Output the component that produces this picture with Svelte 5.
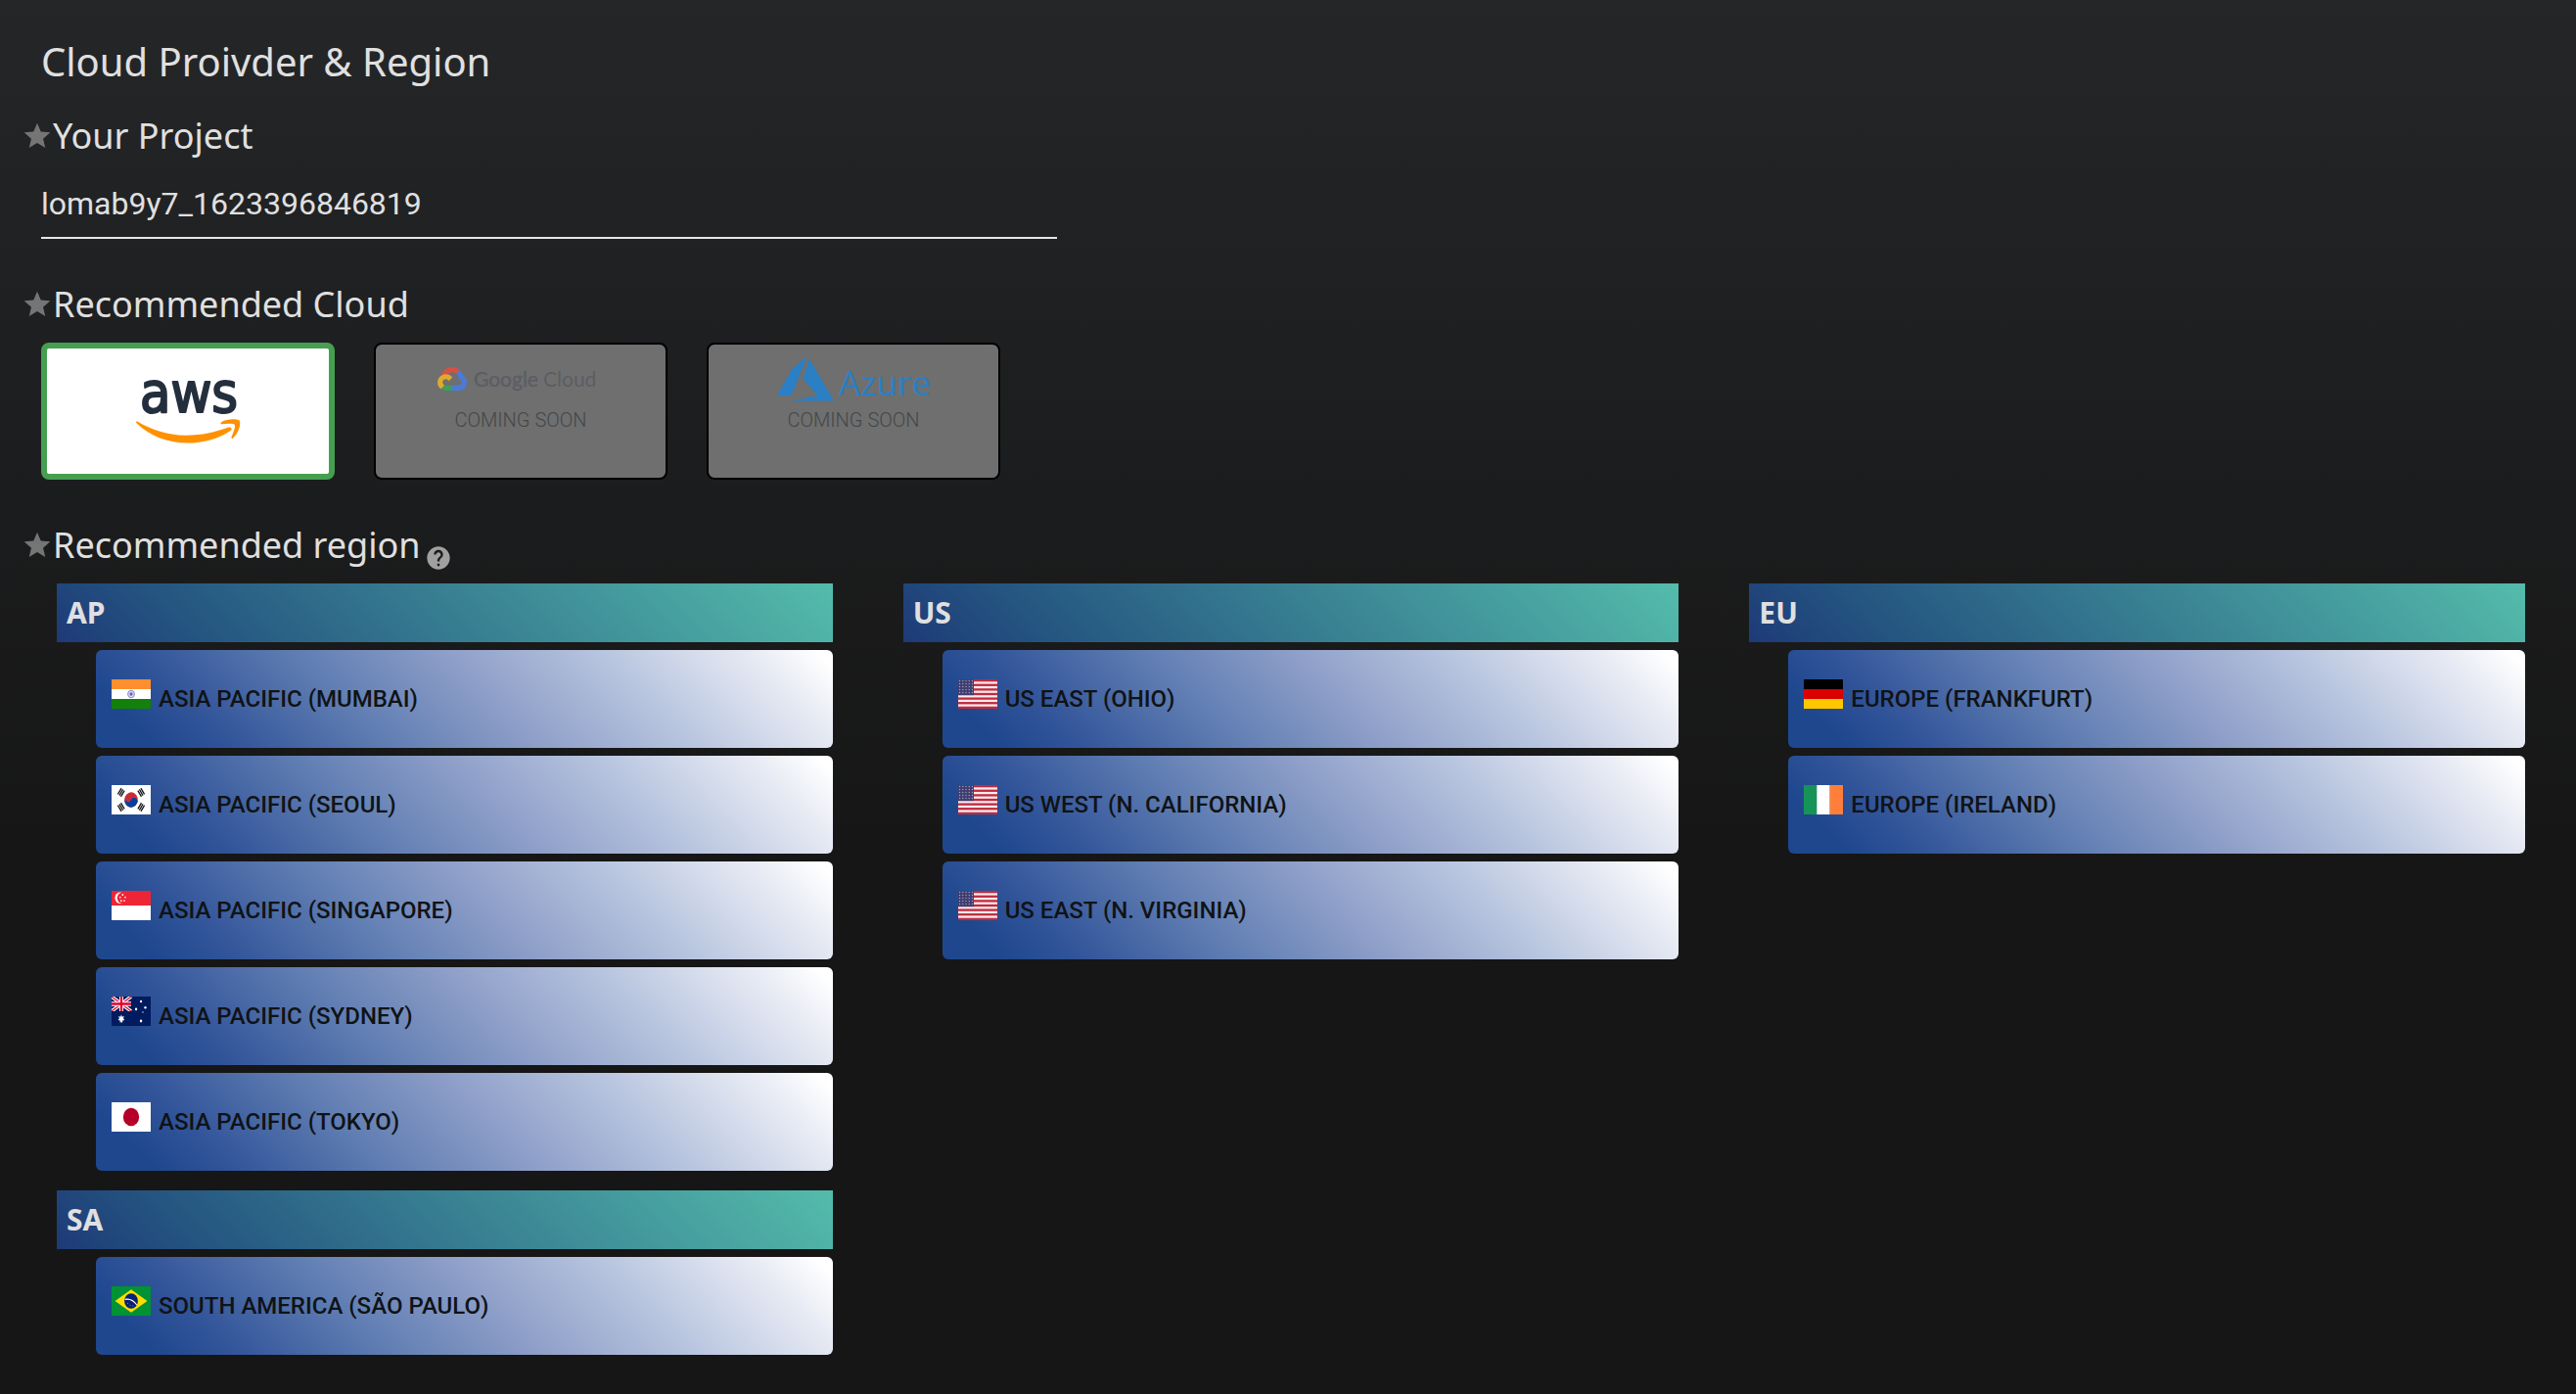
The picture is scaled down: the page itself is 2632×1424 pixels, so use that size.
<script>
  let project = $state('lomab9y7_1623396846819');
  let cloud = $state('aws');
  let region = $state('');

  const columns = [
    [
      {
        code: 'AP',
        regions: [
          { flag: 'in', name: 'ASIA PACIFIC (MUMBAI)' },
          { flag: 'kr', name: 'ASIA PACIFIC (SEOUL)' },
          { flag: 'sg', name: 'ASIA PACIFIC (SINGAPORE)' },
          { flag: 'au', name: 'ASIA PACIFIC (SYDNEY)' },
          { flag: 'jp', name: 'ASIA PACIFIC (TOKYO)' }
        ]
      },
      { code: 'SA', regions: [{ flag: 'br', name: 'SOUTH AMERICA (SÃO PAULO)' }] }
    ],
    [
      {
        code: 'US',
        regions: [
          { flag: 'us', name: 'US EAST (OHIO)' },
          { flag: 'us', name: 'US WEST (N. CALIFORNIA)' },
          { flag: 'us', name: 'US EAST (N. VIRGINIA)' }
        ]
      }
    ],
    [
      {
        code: 'EU',
        regions: [
          { flag: 'de', name: 'EUROPE (FRANKFURT)' },
          { flag: 'ie', name: 'EUROPE (IRELAND)' }
        ]
      }
    ]
  ];

  const stripes = [0, 2, 4, 6, 8, 10, 12];
  const trigrams = [
    { x: 11, y: 7.5, r: -56 },
    { x: 34, y: 7.5, r: 56 },
    { x: 11, y: 22.5, r: 56 },
    { x: 34, y: 22.5, r: -56 }
  ];
  const starRows = [1.5, 4.5, 7.5, 10.5, 13.5];
  const starCols = [1.8, 5.4, 9, 12.6, 16.2];
</script>

{#snippet star()}
  <svg class="star" viewBox="0 0 24 24" aria-hidden="true">
    <path d="M12 17.27L18.18 21l-1.64-7.03L22 9.24l-7.19-.61L12 2 9.19 8.63 2 9.24l5.46 4.73L5.82 21z" />
  </svg>
{/snippet}

{#snippet flagIcon(code)}
  <svg class="flag" viewBox="0 0 45 30" preserveAspectRatio="none" aria-hidden="true">
    {#if code === 'in'}
      <rect width="45" height="30" fill="#fff" />
      <rect width="45" height="10" fill="#ff8f2e" />
      <rect y="20" width="45" height="10" fill="#12800b" />
      <circle cx="22.5" cy="15" r="3.8" fill="#dcdcf0" stroke="#7f7fc4" stroke-width="1" />
      <circle cx="22.5" cy="15" r="1.7" fill="#5c5cb2" />
    {:else if code === 'kr'}
      <rect width="45" height="30" fill="#fff" />
      <g transform="rotate(28 22.5 15)">
        <circle cx="22.5" cy="15" r="7.7" fill="#cb2b38" />
        <path d="M14.8 15a7.7 7.7 0 0 0 15.4 0a3.85 3.85 0 0 0-7.7 0a3.85 3.85 0 0 1-7.7 0z" fill="#05419c" />
      </g>
      {#each trigrams as t}
        <g transform="translate({t.x} {t.y}) rotate({t.r})" fill="#111">
          <rect x="-3.7" y="-2.8" width="7.4" height="1.4" />
          <rect x="-3.7" y="-.7" width="7.4" height="1.4" />
          <rect x="-3.7" y="1.4" width="7.4" height="1.4" />
        </g>
      {/each}
    {:else if code === 'sg'}
      <rect width="45" height="30" fill="#fff" />
      <rect width="45" height="15" fill="#ee2536" />
      <circle cx="9.6" cy="7.3" r="5.7" fill="#fff" />
      <circle cx="12" cy="7.3" r="5.5" fill="#ee2536" />
      <g fill="#fff">
        <circle cx="12.8" cy="4" r=".9" />
        <circle cx="9.9" cy="6.6" r=".9" />
        <circle cx="15.7" cy="6.6" r=".9" />
        <circle cx="11" cy="10.2" r=".9" />
        <circle cx="14.6" cy="10.2" r=".9" />
      </g>
    {:else if code === 'au'}
      <rect width="45" height="30" fill="#001b5e" />
      <path d="M0 0L22.5 15M22.5 0L0 15" stroke="#fff" stroke-width="3.6" />
      <path d="M0 0L22.5 15M22.5 0L0 15" stroke="#e4002b" stroke-width="1.2" />
      <path d="M11.25 0V15M0 7.5H22.5" stroke="#fff" stroke-width="4.6" />
      <path d="M11.25 0V15M0 7.5H22.5" stroke="#e4002b" stroke-width="2.6" />
      <rect y="15" width="22.5" height="4" fill="#001b5e" />
      <g fill="#fff">
        <path d="M11.2 18.4l1 2.4 2.2-.9-.9 2.4 1.4 1.7-2.2.6-.3 2.6-1.2-1.8-1.2 1.8-.3-2.6-2.2-.6 1.4-1.7-.9-2.4 2.2.9z" />
        <circle cx="33.8" cy="5" r="1.3" />
        <circle cx="28.2" cy="12.9" r="1.3" />
        <circle cx="38.8" cy="11.2" r="1.3" />
        <circle cx="33.8" cy="25" r="1.4" />
        <circle cx="36" cy="16" r=".7" />
      </g>
    {:else if code === 'jp'}
      <rect width="45" height="30" fill="#fff" />
      <circle cx="22.5" cy="15" r="9.2" fill="#b50027" />
    {:else if code === 'br'}
      <rect width="45" height="30" fill="#009234" />
      <path d="M22.5 3.3L41 15 22.5 26.7 4 15z" fill="#fedd00" />
      <circle cx="22.5" cy="15" r="7.8" fill="#062272" />
      <path d="M15.4 13.4Q23.5 12 29 19" stroke="#fff" stroke-width="1.2" fill="none" />
      <g fill="#8fa3d0">
        <circle cx="18.5" cy="17.5" r=".5" />
        <circle cx="21.5" cy="19.2" r=".5" />
        <circle cx="24.5" cy="20" r=".5" />
      </g>
    {:else if code === 'us'}
      <rect width="45" height="30" fill="#fbe9ec" />
      {#each stripes as s}
        <rect y={(s * 30) / 13} width="45" height={30 / 13} fill="#bd2c3f" />
      {/each}
      <rect width="18" height="16.15" fill="#3f3d70" />
      {#each starRows as y}
        {#each starCols as x}
          <circle cx={x} cy={y} r=".7" fill="#a9a8c6" />
        {/each}
      {/each}
    {:else if code === 'de'}
      <rect width="45" height="10" fill="#000" />
      <rect y="10" width="45" height="10" fill="#d90000" />
      <rect y="20" width="45" height="10" fill="#ffc700" />
    {:else if code === 'ie'}
      <rect width="15" height="30" fill="#169457" />
      <rect x="15" width="15" height="30" fill="#fff" />
      <rect x="30" width="15" height="30" fill="#ff7f3a" />
    {/if}
  </svg>
{/snippet}

<main>
  <h1>Cloud Proivder &amp; Region</h1>

  <section>
    <label class="heading" for="project">{@render star()}Your Project</label>
    <input id="project" type="text" bind:value={project} />
  </section>

  <section>
    <h2 class="heading">{@render star()}Recommended Cloud</h2>
    <div class="clouds">
      <button class="cloud" class:selected={cloud === 'aws'} onclick={() => (cloud = 'aws')} aria-label="aws">
        <svg class="aws" viewBox="0 0 120 100">
          <text x="61" y="51" text-anchor="middle">aws</text>
          <g transform="translate(0 10)">
            <path d="M8.300 50.600C22 58.500 38 64.800 58 64.800C74 64.800 88 61.500 101.500 56.600C104 55.800 106 58.300 103.500 60C91 68.500 75 72.600 60 72.600C38 72.600 20 64.500 7.600 52.300C6.500 51 7.200 50 8.300 50.600Z" />
            <path d="M94 51.200C100 47.700 108.500 47.700 112.300 49.300C115 51.500 112 62.500 106.200 67.500C105 68.500 104 68 104.500 66.600C106.300 62.200 109 55.500 107.800 53.800C106.500 52.200 99.500 52.800 95 53.300C93.500 53.400 93 52 94 51.200Z" />
          </g>
        </svg>
      </button>

      <button class="cloud" disabled>
        <svg class="logo" viewBox="0 0 180 54">
          <svg x="5" y="13" width="30" height="24" viewBox="0 0 256 206">
            <path fill="#d94f43" d="M170.252 56.819l22.253-22.253 1.483-9.37C153.437-11.677 88.976-7.496 52.42 33.92 42.267 45.423 34.734 59.764 30.717 74.573l7.97-1.123 44.505-7.34 3.436-3.513c19.797-21.742 53.27-24.667 76.128-6.168l7.496.39z" />
            <path fill="#4a7bd9" d="M224.205 73.918a100.249 100.249 0 0 0-30.217-48.722l-31.232 31.232a55.515 55.515 0 0 1 20.379 44.037v5.544c15.35 0 27.797 12.445 27.797 27.796 0 15.352-12.446 27.485-27.797 27.485h-55.671l-5.466 5.934v33.34l5.466 5.231h55.67c39.93.311 72.553-31.494 72.864-71.424a72.303 72.303 0 0 0-31.793-60.453" />
            <path fill="#429d58" d="M71.87 205.796h55.593V161.29H71.87a27.275 27.275 0 0 1-11.4-2.498l-7.887 2.42-22.409 22.253-1.952 7.574c12.567 9.489 27.9 14.825 43.647 14.757" />
            <path fill="#e0a92f" d="M71.87 61.425C31.94 61.664-.237 94.228.001 134.16a72.301 72.301 0 0 0 28.222 56.88l32.248-32.246c-13.99-6.322-20.208-22.786-13.887-36.776 6.32-13.99 22.786-20.208 36.775-13.888a27.796 27.796 0 0 1 13.887 13.888l32.248-32.248A72.224 72.224 0 0 0 71.87 61.425" />
          </svg>
          <text class="google bold" x="42" y="33">Google</text>
          <text class="google" x="113" y="33">Cloud</text>
        </svg>
        <span class="soon">COMING SOON</span>
      </button>

      <button class="cloud" disabled>
        <svg class="logo" viewBox="0 0 180 54">
          <path fill="#2a7fc5" d="M43 1.500L26.800 15.500 12 42H26.500Z" />
          <path fill="#2a7fc5" d="M45 5L38.500 24.800 53.500 42.300 26 47.400H70Z" />
          <text class="azure" x="75" y="42">Azure</text>
        </svg>
        <span class="soon">COMING SOON</span>
      </button>
    </div>
  </section>

  <section>
    <h2 class="heading">
      {@render star()}Recommended region
      <svg class="help" viewBox="0 0 24 24" role="img" aria-label="Help">
        <path d="M12 2C6.480 2 2 6.480 2 12s4.480 10 10 10 10-4.480 10-10S17.520 2 12 2zm1 17h-2v-2h2v2zm2.070-7.750l-.9.920C13.450 12.900 13 13.500 13 15h-2v-.5c0-1.100.450-2.100 1.170-2.830l1.240-1.260c.370-.360.590-.860.590-1.410 0-1.100-.9-2-2-2s-2 .9-2 2H8c0-2.210 1.790-4 4-4s4 1.790 4 4c0 .880-.360 1.680-.930 2.250z" />
      </svg>
    </h2>
    <div class="columns">
      {#each columns as groups}
        <div class="column">
          {#each groups as group}
            <div class="group">
              <h3>{group.code}</h3>
              {#each group.regions as item}
                <button class="region" aria-pressed={region === item.name} onclick={() => (region = item.name)}>
                  {@render flagIcon(item.flag)}
                  <span>{item.name}</span>
                </button>
              {/each}
            </div>
          {/each}
        </div>
      {/each}
    </div>
  </section>
</main>

<style>
  :global(body) {
    margin: 0;
    background: #161616;
  }

  main {
    box-sizing: border-box;
    min-height: 100vh;
    padding: 39px 52px 40px 42px;
    background: linear-gradient(#252628 0%, #1c1d1e 33%, #161616 62%);
    color: #e0e0e0;
    font-family: 'Noto Sans', sans-serif;
  }

  h1 {
    margin: 0 0 30px;
    font-size: 40px;
    line-height: 48px;
    font-weight: 400;
  }

  section + section {
    margin-top: 45px;
  }

  .heading {
    display: flex;
    align-items: center;
    height: 44px;
    margin: 0 0 0 -20px;
    font-size: 36px;
    line-height: 44px;
    font-weight: 400;
  }

  .star {
    width: 32px;
    height: 32px;
    fill: #757575;
  }

  .help {
    width: 28px;
    height: 28px;
    margin: 21px 0 0 5px;
    align-self: flex-start;
    flex: none;
    fill: #a0a0a0;
  }

  input {
    box-sizing: border-box;
    display: block;
    width: 100%;
    max-width: 1038px;
    padding: 26px 0 12px;
    border: 0;
    border-bottom: 2px solid #e6e6e6;
    background: none;
    color: #e0e0e0;
    font: 32px/43px Roboto, sans-serif;
    outline: none;
  }

  .clouds {
    display: flex;
    flex-wrap: wrap;
    gap: 40px;
    margin-top: 17px;
  }

  .cloud {
    box-sizing: border-box;
    display: flex;
    flex-direction: column;
    align-items: center;
    width: 300px;
    height: 140px;
    padding: 10px 0 0;
    border: 2px solid #000;
    border-radius: 8px;
    background: #6f6f6f;
  }

  .cloud.selected {
    justify-content: center;
    padding: 0;
    border: 6px solid #469f51;
    background: #fff;
  }

  .aws {
    width: 120px;
    height: 100px;
    overflow: visible;
    fill: #ff9100;
  }

  .aws text {
    font: 57px 'DejaVu Sans Condensed', 'Open Sans', sans-serif;
    fill: #242f3e;
    stroke: #242f3e;
    stroke-width: 2px;
    stroke-linejoin: round;
  }

  .logo {
    width: 180px;
    height: 54px;
  }

  .google {
    font: 21px Lato, sans-serif;
    fill: #5b5e63;
  }

  .google.bold {
    stroke: #5b5e63;
    stroke-width: 0.4px;
  }

  .azure {
    font: 35px 'Open Sans', sans-serif;
    fill: #2a7fc5;
  }

  .soon {
    color: #454747;
    font: 300 20px/26px Roboto, sans-serif;
  }

  .columns {
    display: grid;
    grid-template-columns: repeat(3, 1fr);
    gap: 72px;
    margin: 17px 0 0 16px;
  }

  .column {
    display: flex;
    flex-direction: column;
    gap: 20px;
  }

  .group {
    display: flex;
    flex-direction: column;
    gap: 8px;
  }

  h3 {
    margin: 0;
    padding: 0 10px;
    background: linear-gradient(45deg, #1e3a78, #23517f 15%, #54bcab);
    font-size: 30px;
    line-height: 60px;
    font-weight: 700;
  }

  .region {
    display: flex;
    align-items: center;
    gap: 8px;
    height: 100px;
    margin-left: 40px;
    padding: 0 16px;
    border: 0;
    border-radius: 6px;
    background: linear-gradient(45deg, #1e478e 7%, #33559a 17%, #5f7db2 35%, #8d9ec8 53%, #b8c5df 72%, #e8ebf4 90%, #fff 98%);
    color: #101316;
    font: 500 24px/28px Roboto, sans-serif;
    text-align: left;
  }

  .flag {
    width: 40px;
    height: 30px;
    margin-bottom: 10px;
    flex: none;
  }
</style>
